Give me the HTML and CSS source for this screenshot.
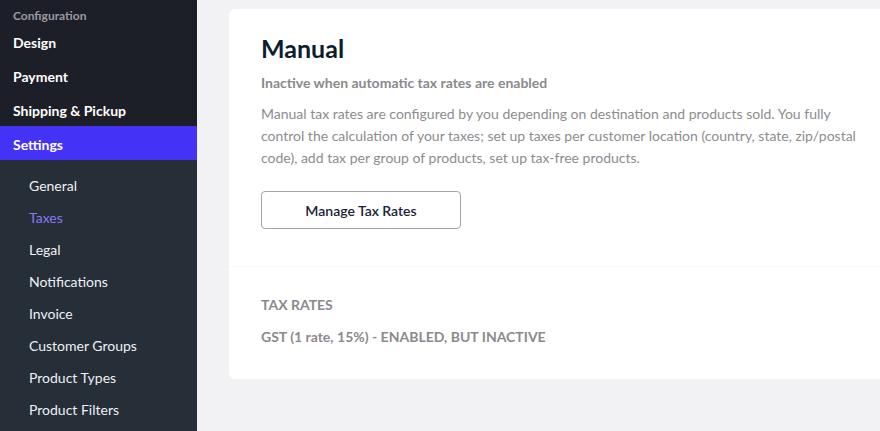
FILE: index.html
```html
<!DOCTYPE html>
<html lang="en">
<head>
<meta charset="utf-8">
<title>Taxes</title>
<link rel="stylesheet" href="styles.css">
</head>
<body>
<div class="app">
  <aside class="sidebar">
    <div class="sidebar-top">
      <div class="section-label">Configuration</div>
      <a class="nav-item">Design</a>
      <a class="nav-item">Payment</a>
      <a class="nav-item">Shipping &amp; Pickup</a>
    </div>
    <a class="nav-item active">Settings</a>
    <nav class="subnav">
      <a class="sub-item">General</a>
      <a class="sub-item current">Taxes</a>
      <a class="sub-item">Legal</a>
      <a class="sub-item">Notifications</a>
      <a class="sub-item">Invoice</a>
      <a class="sub-item">Customer Groups</a>
      <a class="sub-item">Product Types</a>
      <a class="sub-item">Product Filters</a>
    </nav>
  </aside>
  <main class="main">
    <section class="card">
      <div class="card-section">
        <h1 class="card-title">Manual</h1>
        <p class="card-subtitle">Inactive when automatic tax rates are enabled</p>
        <p class="card-text">Manual tax rates are configured by you depending on destination and products sold. You fully control the calculation of your taxes; set up taxes per customer location (country, state, zip/postal code), add tax per group of products, set up tax-free products.</p>
        <button class="btn-outline" type="button">Manage Tax Rates</button>
      </div>
      <div class="card-section rates">
        <div class="rates-label">TAX RATES</div>
        <div class="rates-value">GST (1 rate, 15%) - ENABLED, BUT INACTIVE</div>
      </div>
    </section>
  </main>
</div>
</body>
</html>
```

FILE: styles.css
```css
* { box-sizing: border-box; }
html, body { margin: 0; padding: 0; }
body {
  font-family: Lato, "Open Sans", "Liberation Sans", sans-serif;
  background: #f2f1f4;
  overflow: hidden;
}
.app {
  display: flex;
  height: 100vh;
  overflow: hidden;
}
.sidebar {
  width: 197px;
  flex: 0 0 197px;
  background: #262e38;
  display: flex;
  flex-direction: column;
}
.sidebar-top {
  background: #1d1f28;
  padding-top: 8px;
}
.section-label {
  font-size: 12px;
  font-weight: 700;
  color: #9b98a3;
  line-height: 16px;
  padding-left: 13px;
}
.nav-item {
  display: block;
  height: 34px;
  line-height: 31px;
  padding: 3px 0 0 13px;
  font-size: 14px;
  font-weight: 700;
  color: #ffffff;
}
.nav-item.active {
  background: #4432f6;
}
.subnav {
  padding: 10px 0;
  display: flex;
  flex-direction: column;
}
.sub-item {
  display: block;
  height: 32px;
  line-height: 32px;
  padding-left: 29px;
  font-size: 14px;
  color: #eef0f3;
}
.sub-item.current {
  color: #8878f8;
}
.main {
  flex: 1;
  padding: 9px 0 0 32px;
  min-width: 0;
}
.card {
  width: 720px;
  background: #ffffff;
  border-radius: 6px;
}
.card-section {
  padding: 24px 32px 37px;
}
.card-section + .card-section {
  border-top: 1px solid #f8f8f9;
}
.card-title {
  margin: 0;
  font-size: 25px;
  line-height: 30px;
  font-weight: 700;
  color: #0f1c30;
}
.card-subtitle {
  margin: 10px 0 0;
  font-size: 14px;
  line-height: 20px;
  font-weight: 700;
  color: #8a8a8d;
}
.card-text {
  margin: 10px 0 0;
  max-width: 610px;
  font-size: 14px;
  line-height: 22px;
  color: #8c8c90;
}
.btn-outline {
  display: block;
  margin-top: 22px;
  width: 200px;
  height: 38px;
  border: 1px solid #a3a3a8;
  border-radius: 4px;
  background: #ffffff;
  font-family: inherit;
  font-size: 14px;
  font-weight: 600;
  color: #1a2236;
  cursor: pointer;
}
.card-section.rates {
  padding: 28px 32px 32px;
}
.rates-label,
.rates-value {
  font-size: 14px;
  line-height: 20px;
  font-weight: 700;
  color: #8a8a8d;
}
.rates-value {
  margin-top: 12px;
}
```
